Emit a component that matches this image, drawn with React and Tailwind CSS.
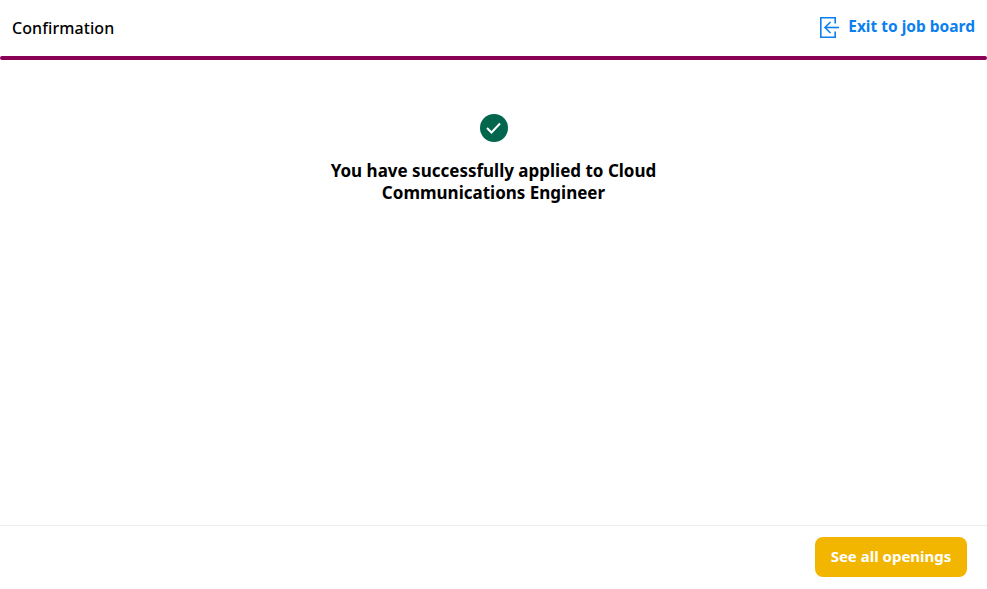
import React from "react";

const ExitIcon = () => (
  <svg width="19" height="21" viewBox="0 0 19 21" fill="none" stroke="#0b7ff0" strokeWidth="1.6">
    <path d="M15.2 6.5V0.8H0.8V20.2H15.2V14.5" />
    <path d="M19 10.5H5.5" />
    <path d="M10.5 5L5 10.5L10.5 16" />
  </svg>
);

const App = () => {
  return (
    <div className="flex flex-col h-[589px] bg-white text-black font-['Noto_Sans',sans-serif]">
      <header className="shrink-0">
        <div className="flex items-center justify-between h-14 px-3">
          <h1 className="text-base font-medium tracking-[0.08px]">Confirmation</h1>
          <a className="flex items-center gap-[9px] text-[#0b7ff0] text-[15.5px] font-bold mb-[2px]">
            <ExitIcon />
            Exit to job board
          </a>
        </div>
        <div className="h-1 rounded-full bg-[#8a0057]"></div>
      </header>

      <main className="flex-1 flex flex-col items-center pt-[54px]">
        <div className="flex items-center justify-center w-7 h-7 rounded-full bg-[#02664f]">
          <svg width="15" height="12" viewBox="0 0 15 12" fill="none" stroke="white" strokeWidth="2">
            <path d="M1 6L5.5 10.5L14 1.5" />
          </svg>
        </div>
        <h2 className="mt-[18px] w-[340px] text-center text-[17px] leading-[22px] font-bold">
          You have successfully applied to Cloud Communications Engineer
        </h2>
      </main>

      <footer className="flex justify-end items-start h-[64px] shrink-0 border-t border-[#ececec] pt-[11px] pr-5">
        <button className="w-[152px] h-10 pb-[2px] rounded-lg bg-[#f2b600] text-white text-[15px] font-bold">
          See all openings
        </button>
      </footer>
    </div>
  );
};

export default App;
